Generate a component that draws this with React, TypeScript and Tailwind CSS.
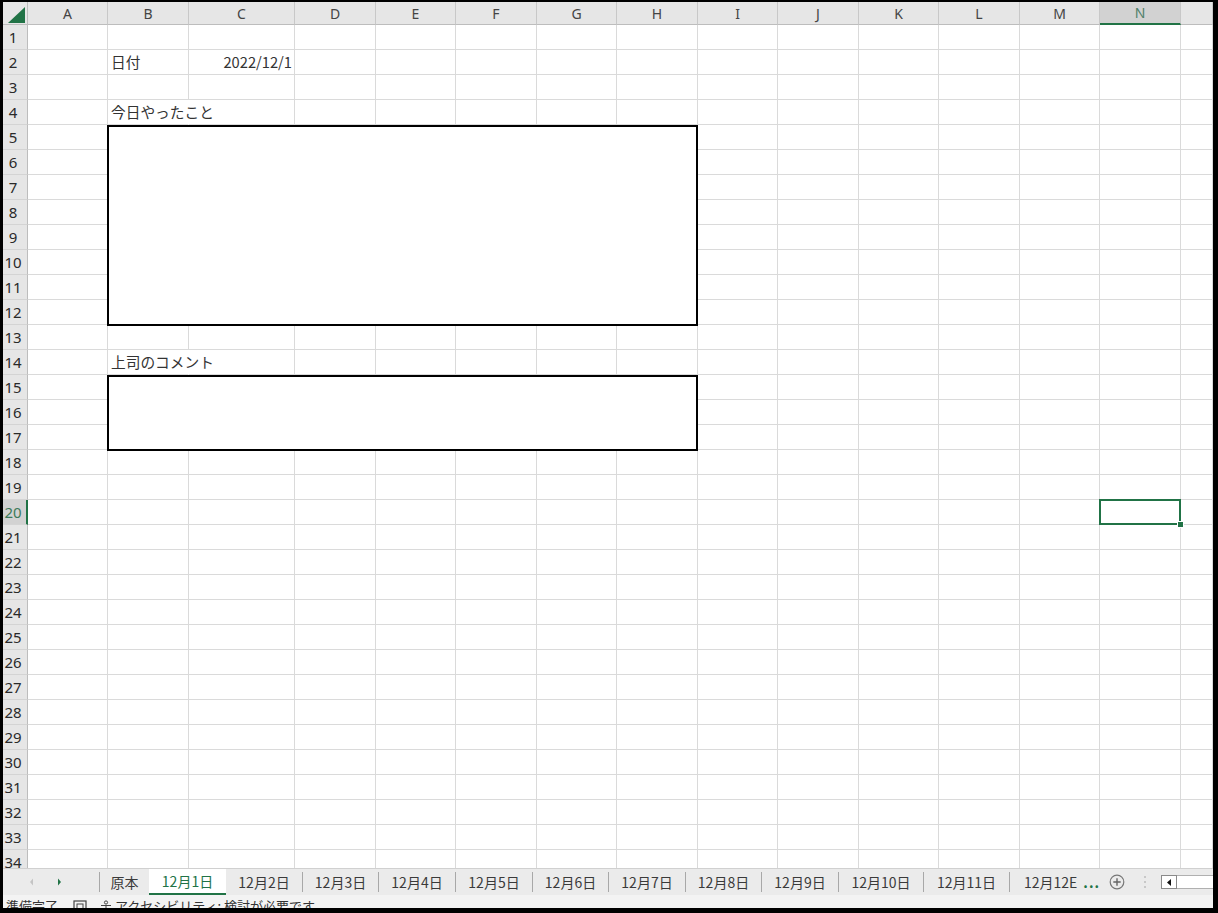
import React from "react";

const COLS = ["A", "B", "C", "D", "E", "F", "G", "H", "I", "J", "K", "L", "M", "N", ""];
const FONT = "font-['Noto_Sans_CJK_JP','Noto_Sans',sans-serif]";

const isMerged = (r: number, c: number) =>
  c >= 1 && c <= 7 && ((r >= 5 && r <= 12) || (r >= 15 && r <= 17));

function HeaderRow() {
  return (
    <>
      <div className="bg-[#e6e6e6] border-r border-b border-[#bdbdbd] flex">
        <svg width="24" height="22" viewBox="0 0 24 22">
          <polygon points="22,5 22,21 5,21" fill="#217346" />
        </svg>
      </div>
      {COLS.map((c, i) =>
        c === "N" ? (
          <div
            key={i}
            className="bg-[#d2d2d2] border-r border-[#c8c8c8] border-b-2 border-b-[#217346] flex items-center justify-center text-[14px] text-[#4f806a] font-['Noto_Sans',sans-serif]"
          >
            {c}
          </div>
        ) : (
          <div
            key={i}
            className="bg-[#e6e6e6] border-r border-b border-[#c8c8c8] border-b-[#bdbdbd] flex items-center justify-center text-[14px] text-[#444] font-['Noto_Sans',sans-serif]"
          >
            {c}
          </div>
        )
      )}
    </>
  );
}

function RowHeader({ r }: { r: number }) {
  if (r === 20) {
    return (
      <div className="bg-[#d2d2d2] border-b border-[#d4d4d4] border-r-2 border-r-[#217346] flex items-center justify-center pr-[3px] text-[15px] text-[#3d7a5a] font-['Noto_Sans',sans-serif]">
        {r}
      </div>
    );
  }
  return (
    <div className="bg-[#e6e6e6] border-b border-r border-[#d4d4d4] border-r-[#bdbdbd] flex items-center justify-center pr-[4px] text-[15px] text-[#2a2a2a] font-['Noto_Sans',sans-serif]">
      {r}
    </div>
  );
}

function DataCell({ r, c }: { r: number; c: number }) {
  const base = "border-r border-b border-[#dadada] flex items-center text-[14.7px] text-[#333]";
  if (r === 2 && c === 1) return <div className={`${base} pl-[3px]`}>日付</div>;
  if (r === 2 && c === 2)
    return <div className={`${base} justify-end pr-[2px]`}>2022/12/1</div>;
  if (r === 4 && c === 1)
    return (
      <div className={`${base} border-r-transparent pl-[3px] whitespace-nowrap overflow-visible relative z-10`}>
        今日やったこと
      </div>
    );
  if (r === 14 && c === 1)
    return (
      <div className={`${base} border-r-transparent pl-[3px] whitespace-nowrap overflow-visible relative z-10`}>
        上司のコメント
      </div>
    );
  if (r === 20 && c === 13)
    return (
      <div className={`${base} relative z-20`}>
        <div className="absolute -left-px -top-px -right-px -bottom-px border-2 border-[#217346]" />
        <div className="absolute -right-[4px] -bottom-[4px] w-[7px] h-[7px] bg-[#217346] border border-white" />
      </div>
    );
  return <div className={base} />;
}

function Grid() {
  const rows = Array.from({ length: 34 }, (_, i) => i + 1);
  return (
    <div className="grid grid-cols-[25px_80px_81px_106px_81px_80px_81px_80px_81px_80px_81px_80px_81px_80px_81px_1fr] grid-rows-[23px_repeat(34,25px)] h-[866px] overflow-hidden shrink-0 bg-white">
      <HeaderRow />
      {rows.map((r) => (
        <React.Fragment key={r}>
          <RowHeader r={r} />
          {COLS.map((_, c) => (isMerged(r, c) ? null : <DataCell key={c} r={r} c={c} />))}
        </React.Fragment>
      ))}
      <div className="col-start-3 col-end-10 row-start-6 row-end-14 -ml-px -mb-px border-2 border-black bg-white relative z-10" />
      <div className="col-start-3 col-end-10 row-start-16 row-end-19 -ml-px -mb-px border-2 border-black bg-white relative z-10" />
    </div>
  );
}

const TABS: { label: string; w: string; sep?: boolean; active?: boolean }[] = [
  { label: "原本", w: "w-[50px]", sep: true },
  { label: "12月1日", w: "w-[77px]", active: true },
  { label: "12月2日", w: "w-[76px]" },
  { label: "12月3日", w: "w-[76px]", sep: true },
  { label: "12月4日", w: "w-[77px]", sep: true },
  { label: "12月5日", w: "w-[77px]", sep: true },
  { label: "12月6日", w: "w-[76px]", sep: true },
  { label: "12月7日", w: "w-[77px]", sep: true },
  { label: "12月8日", w: "w-[76px]", sep: true },
  { label: "12月9日", w: "w-[77px]", sep: true },
  { label: "12月10日", w: "w-[85px]", sep: true },
  { label: "12月11日", w: "w-[86px]", sep: true },
];

function TabBar() {
  return (
    <div className="h-[27px] shrink-0 bg-[#ebebeb] border-t border-[#d0d0d0] flex items-stretch text-[14px] text-[#3a3a3a]">
      <div className="w-[96px] shrink-0">
        <svg width="96" height="26" viewBox="0 0 96 26">
          <polygon points="27,13 30,9.5 30,16.5" fill="#c4c4c4" />
          <polygon points="58,13 55,9.5 55,16.5" fill="#217346" />
        </svg>
      </div>
      {TABS.map((t) =>
        t.active ? (
          <div
            key={t.label}
            className={`${t.w} shrink-0 bg-white border-b-2 border-[#217346] flex items-center justify-center text-[#217346]`}
          >
            {t.label}
          </div>
        ) : (
          <div key={t.label} className={`${t.w} shrink-0 flex items-center`}>
            {t.sep && <div className="w-px h-[20px] bg-[#a8a8a8] shrink-0" />}
            <div className="flex-1 text-center">{t.label}</div>
          </div>
        )
      )}
      <div className="w-[91px] shrink-0 flex items-center">
        <div className="w-px h-[20px] bg-[#a8a8a8] shrink-0" />
        <div className="pl-[14px] whitespace-nowrap">12月12E</div>
        <div className="pl-[6px] text-[#217346] font-bold tracking-[1px]">...</div>
      </div>
      <div className="w-[34px] shrink-0 flex items-center justify-center">
        <svg width="16" height="16" viewBox="0 0 16 16">
          <circle cx="8" cy="8" r="6.8" fill="none" stroke="#777" strokeWidth="1.2" />
          <path d="M8 4.3v7.4M4.3 8h7.4" stroke="#666" strokeWidth="1.4" />
        </svg>
      </div>
      <div className="w-[22px] shrink-0 flex items-center justify-center">
        <svg width="4" height="14" viewBox="0 0 4 14">
          <circle cx="2" cy="2" r="1" fill="#bdbdbd" />
          <circle cx="2" cy="7" r="1" fill="#bdbdbd" />
          <circle cx="2" cy="12" r="1" fill="#bdbdbd" />
        </svg>
      </div>
      <div className="w-[5px] shrink-0" />
      <div className="flex-1 flex items-center">
        <div className="w-[16px] h-[14px] border border-[#8a8a8a] bg-white flex items-center justify-center shrink-0">
          <svg width="4" height="7" viewBox="0 0 4 7">
            <polygon points="0,3.5 4,0 4,7" fill="#111" />
          </svg>
        </div>
        <div className="flex-1 h-[14px] border-y border-[#b0b0b0] bg-white" />
      </div>
    </div>
  );
}

function StatusBar() {
  return (
    <div className="flex-1 bg-[#f3f3f3] overflow-hidden flex items-start pt-[3px] text-[13px] leading-[16px] text-[#333]">
      <div className="pl-[3px] w-[70px] shrink-0">準備完了</div>
      <div className="w-[27px] shrink-0 pt-[2px]">
        <svg width="14" height="14" viewBox="0 0 14 14">
          <rect x="1" y="1" width="12" height="12" fill="none" stroke="#444" strokeWidth="1.2" />
          <rect x="4" y="4" width="6" height="6" fill="none" stroke="#444" strokeWidth="1" />
        </svg>
      </div>
      <div className="w-[14px] shrink-0 pt-[2px]">
        <svg width="12" height="14" viewBox="0 0 12 14">
          <circle cx="6" cy="2.5" r="1.6" fill="none" stroke="#444" strokeWidth="1" />
          <path d="M1 5.5h10M6 5.5v4M6 9.5l-3 4M6 9.5l3 4" stroke="#444" strokeWidth="1" fill="none" />
        </svg>
      </div>
      <div className="pl-[1px] whitespace-nowrap">アクセシビリティ: 検討が必要です</div>
    </div>
  );
}

export default function App() {
  return (
    <div className={`w-[1218px] h-[913px] bg-white overflow-hidden ${FONT}`}>
      <div className="w-full h-full border-l-[3px] border-t-[2px] border-r-[5px] border-b-[5px] border-black flex flex-col overflow-hidden">
        <Grid />
        <TabBar />
        <StatusBar />
      </div>
    </div>
  );
}
